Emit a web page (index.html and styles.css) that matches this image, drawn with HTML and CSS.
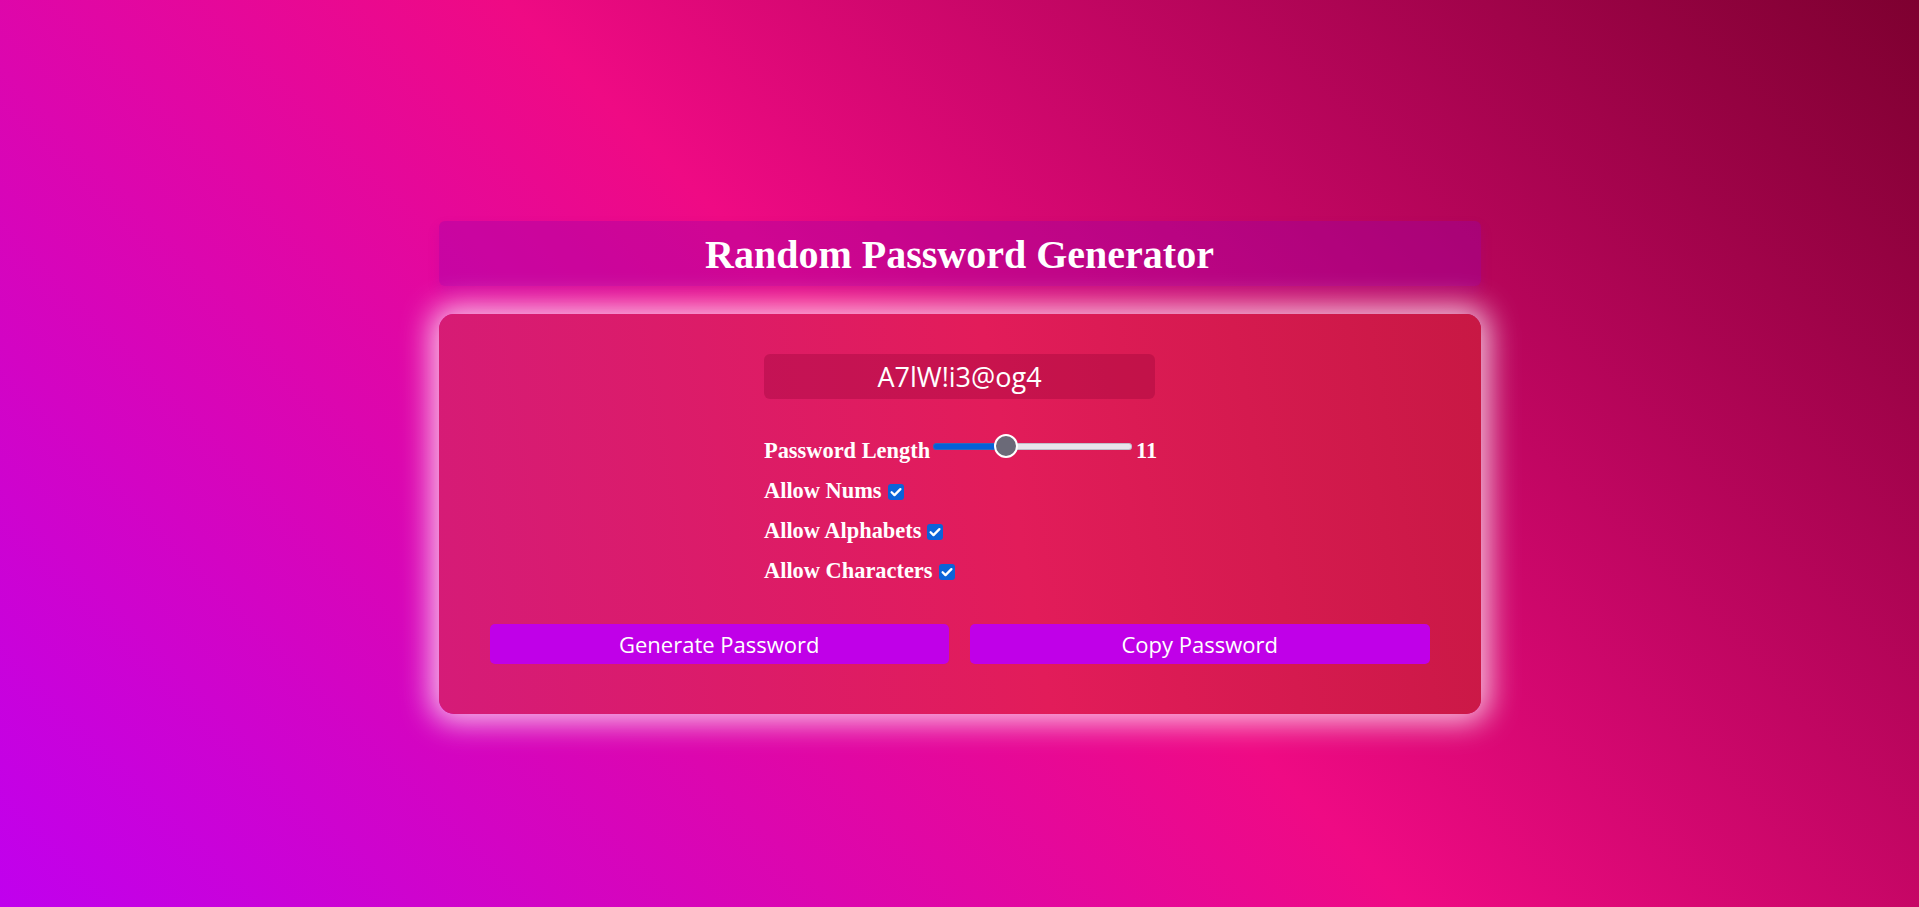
FILE: index.html
```html
<!DOCTYPE html>
<html lang="en">
<head>
<meta charset="utf-8">
<title>Random Password Generator</title>
<link rel="stylesheet" href="styles.css">
</head>
<body>
<main class="app">
  <h1 class="title">Random Password Generator</h1>
  <section class="card">
    <div class="output">A7lW!i3@og4</div>
    <div class="controls">
      <div class="row"><label for="len">Password Length</label><input id="len" class="slider" type="range" min="4" max="24" value="11" style="--fill: 37%"><span class="value">11</span></div>
      <div class="row"><label for="nums">Allow Nums</label><input id="nums" class="check" type="checkbox" checked></div>
      <div class="row"><label for="alpha">Allow Alphabets</label><input id="alpha" class="check" type="checkbox" checked></div>
      <div class="row"><label for="chars">Allow Characters</label><input id="chars" class="check" type="checkbox" checked></div>
    </div>
    <div class="actions">
      <button class="btn" type="button">Generate Password</button>
      <button class="btn" type="button">Copy Password</button>
    </div>
  </section>
</main>
</body>
</html>
```

FILE: styles.css
```css
* { box-sizing: border-box; }

html, body {
  margin: 0;
  height: 100%;
}

body {
  background: linear-gradient(45deg, #c000ee 0%, #ef0a84 50%, #7e0030 100%);
  font-family: "Liberation Serif", "Times New Roman", serif;
  color: #fff;
  overflow: hidden;
}

.app {
  width: 1042px;
  margin: 0 auto;
  padding-top: 221px;
}

.title {
  margin: 0 0 28px;
  height: 65px;
  line-height: 67px;
  text-align: center;
  font-size: 40px;
  font-weight: bold;
  background: rgba(150, 0, 175, 0.35);
  border-radius: 6px;
  box-shadow: 0 6px 12px rgba(140, 0, 170, 0.18);
}

.card {
  background: linear-gradient(80deg, #d51b78 0%, #e21c5a 55%, #c81844 100%);
  border-radius: 15px;
  padding: 40px 51px 50px;
  box-shadow: 0 0 30px 8px rgba(255, 240, 248, 0.8);
}

.output {
  width: 391px;
  height: 45px;
  margin: 0 auto;
  border-radius: 6px;
  background: rgba(140, 0, 50, 0.3);
  text-align: center;
  line-height: 45px;
  font-family: "Open Sans", "Noto Sans", sans-serif;
  font-size: 27px;
}

.controls {
  width: 391px;
  margin: 32px auto 33px;
}

.row {
  display: block;
  height: 40px;
  line-height: 40px;
  font-size: 22.4px;
  font-weight: bold;
  white-space: nowrap;
}

.slider {
  -webkit-appearance: none;
  appearance: none;
  width: 199px;
  height: 24px;
  margin: 0 3px 2px 3px;
  background: transparent;
  vertical-align: baseline;
}

.slider::-webkit-slider-runnable-track {
  height: 7px;
  border-radius: 4px;
  background: linear-gradient(to right, #0560d8 var(--fill), #e8e6ec var(--fill));
  box-shadow: inset 0 0 0 1px rgba(120, 120, 140, 0.35);
}

.slider::-webkit-slider-thumb {
  -webkit-appearance: none;
  appearance: none;
  width: 24px;
  height: 24px;
  margin-top: -8.5px;
  border-radius: 50%;
  background: #6b6a78;
  border: 2px solid #fff;
}

.value {
  margin-left: 1px;
}

.check {
  -webkit-appearance: none;
  appearance: none;
  width: 16px;
  height: 16px;
  margin: 0 0 0 6px;
  border-radius: 3px;
  background-color: #0b63d9;
  background-image: url("data:image/svg+xml,%3Csvg xmlns='http://www.w3.org/2000/svg' viewBox='0 0 16 16'%3E%3Cpath d='M3.6 8.2l2.9 2.9L12.4 5.1' fill='none' stroke='white' stroke-width='2.3' stroke-linecap='round' stroke-linejoin='round'/%3E%3C/svg%3E");
  background-size: 16px 16px;
  vertical-align: -2px;
}

.actions {
  display: flex;
  gap: 21px;
}

.btn {
  flex: 1;
  height: 40px;
  border: none;
  border-radius: 5px;
  background: #c000e8;
  color: #fff;
  font-family: "Open Sans", "Noto Sans", sans-serif;
  font-size: 22px;
  padding: 0;
}
```
